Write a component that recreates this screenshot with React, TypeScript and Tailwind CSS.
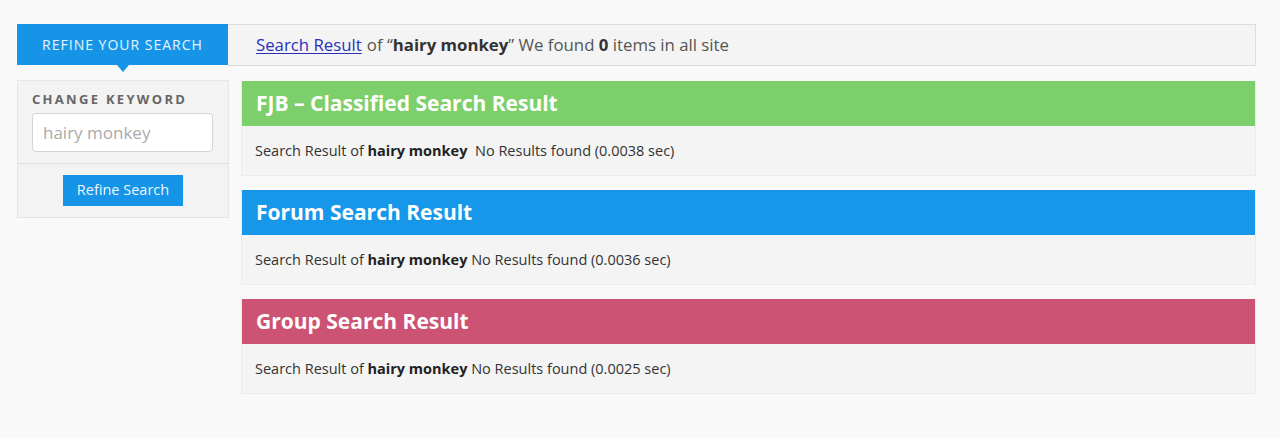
import React from "react";

const sections = [
  { title: "FJB – Classified Search Result", color: "bg-[#7dcf6b]", time: "0.0038", extraSpace: true },
  { title: "Forum Search Result", color: "bg-[#1697e9]", time: "0.0036", extraSpace: false },
  { title: "Group Search Result", color: "bg-[#cc5374]", time: "0.0025", extraSpace: false },
];

export default function App() {
  return (
    <div className="min-h-[438px] w-[1280px] bg-[#f9f9f9] pl-[17px] pr-[24px] pt-[24px] text-[#555] font-['Open_Sans',sans-serif]">
      <div className="flex h-[42px]">
        <div className="relative flex w-[211px] h-[41px] items-center justify-center bg-[#1695e8] text-[14px] text-white/90 tracking-[1px]">
          REFINE YOUR SEARCH
          <div className="absolute left-[100px] top-[41px] h-0 w-0 border-l-[6px] border-r-[6px] border-t-[7px] border-l-transparent border-r-transparent border-t-[#1695e8]" />
        </div>
        <div className="flex flex-1 items-center border border-l-0 border-[#dcdcdc] bg-[#f4f4f4] pl-[28px] text-[16.8px] text-[#555]">
          <a href="#" className="text-[#2a2fc0] underline underline-offset-2">Search Result</a>
          <span className="ml-[5px]">of “<b className="font-bold text-[#333]">hairy monkey</b>” We found <b className="font-bold text-[#333]">0</b> items in all site</span>
        </div>
      </div>
      <div className="mt-[14px] flex gap-[12px]">
        <div className="w-[212px] self-start border border-[#e6e6e6] bg-[#f3f3f3]">
          <div className="px-[14px] pt-[9px] pb-[11px]">
            <div className="text-[13px] font-bold tracking-[2.3px] text-[#666]">CHANGE KEYWORD</div>
            <input
              className="mt-[3px] h-[39px] w-[181px] rounded-[4px] border border-[#d4d4d4] bg-white px-[10px] text-[17px] text-[#999] placeholder:text-[#aaa] outline-none"
              placeholder="hairy monkey"
            />
          </div>
          <div className="flex justify-center border-t border-[#e0e0e0] pt-[11px] pb-[11px]">
            <button className="h-[31px] w-[120px] bg-[#1695e8] text-[14.5px] text-white/95">Refine Search</button>
          </div>
        </div>
        <div className="flex flex-1 flex-col gap-[14px] pt-px">
          {sections.map((s) => (
            <div key={s.title} className="border border-[#ececec] border-t-0">
              <div className={`${s.color} flex h-[45px] items-center px-[14px] text-[21px] font-bold text-white`}>
                {s.title}
              </div>
              <div className="flex h-[49px] items-center bg-[#f4f4f4] px-[13px] text-[14.5px] text-[#333]">
                <span>
                  Search Result of <b className="font-bold text-[#222]">hairy monkey</b>
                  {s.extraSpace ? "\u00a0 " : " "}No Results found ({s.time} sec)
                </span>
              </div>
            </div>
          ))}
        </div>
      </div>
    </div>
  );
}
